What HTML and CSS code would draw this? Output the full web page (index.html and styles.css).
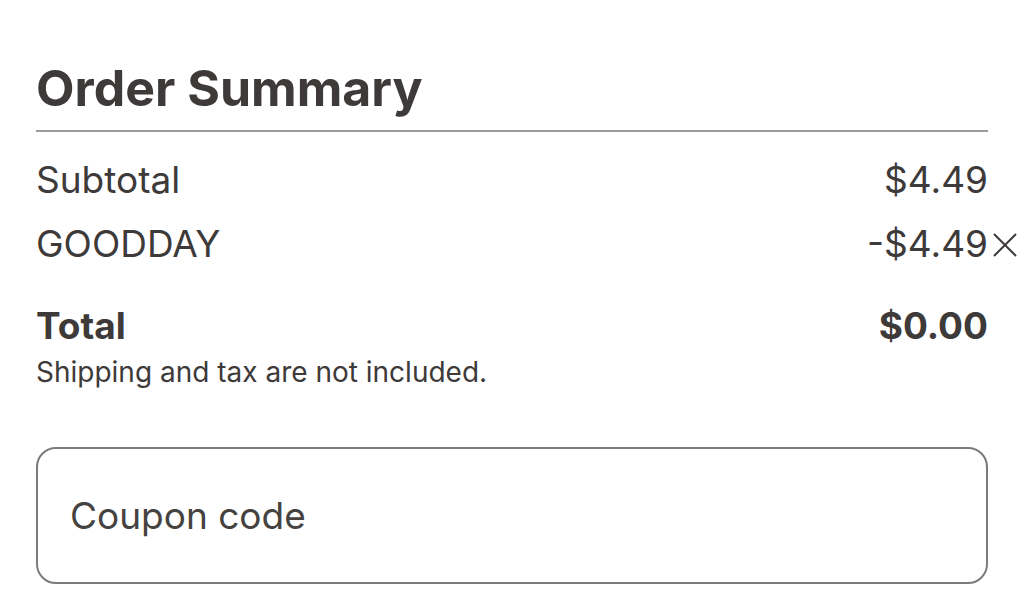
FILE: index.html
```html
<!DOCTYPE html>
<html lang="en">
<head>
    <meta charset="UTF-8">
    <meta name="viewport" content="width=device-width, initial-scale=1.0">
    <title>Order Summary</title>
    <link rel="stylesheet" href="styles.css">
</head>
<body>
    <div class="summary">
        <h1 class="summary-title">Order Summary</h1>

        <div class="summary-row">
            <span>Subtotal</span>
            <span>$4.49</span>
        </div>
        <div class="summary-row">
            <span>GOODDAY</span>
            <span class="discount">-$4.49<svg class="remove" viewBox="0 0 26 26" width="26" height="26"><path d="M2 2 L24 24 M24 2 L2 24" stroke="#3d3a39" stroke-width="2" fill="none"/></svg></span>
        </div>

        <div class="summary-row total-row">
            <span>Total</span>
            <span>$0.00</span>
        </div>
        <p class="summary-note">Shipping and tax are not included.</p>

        <div class="coupon-box">
            <span class="coupon-placeholder">Coupon code</span>
        </div>
    </div>
</body>
</html>
```

FILE: styles.css
```css
/* Basic Styles */
body {
    margin: 0;
    padding: 0 36px;
    background: #fff;
    font-family: Inter, "Noto Sans", sans-serif;
    color: #3d3a39;
}

/* Summary */
.summary {
    padding-top: 52px;
}

.summary-title {
    margin: 0;
    font-size: 50px;
    font-weight: 700;
    line-height: 72px;
    padding-bottom: 6px;
    border-bottom: 2px solid #9c9a99;
}

.summary-row {
    display: flex;
    justify-content: space-between;
    font-size: 37px;
    line-height: 64px;
}

.summary-row:first-of-type {
    margin-top: 16px;
}

.discount {
    position: relative;
}

.remove {
    position: absolute;
    left: 100%;
    top: 20px;
    margin-left: 4px;
}

.total-row {
    margin-top: 30px;
    font-weight: 700;
    line-height: 40px;
}

.summary-note {
    margin: 9px 0 0;
    font-size: 28px;
    line-height: 34px;
}

/* Coupon */
.coupon-box {
    margin-top: 58px;
    height: 133px;
    border: 2px solid #7d7b7a;
    border-radius: 20px;
    display: flex;
    align-items: center;
    padding: 0 32px;
}

.coupon-placeholder {
    font-size: 37px;
    color: #45423f;
}
```
